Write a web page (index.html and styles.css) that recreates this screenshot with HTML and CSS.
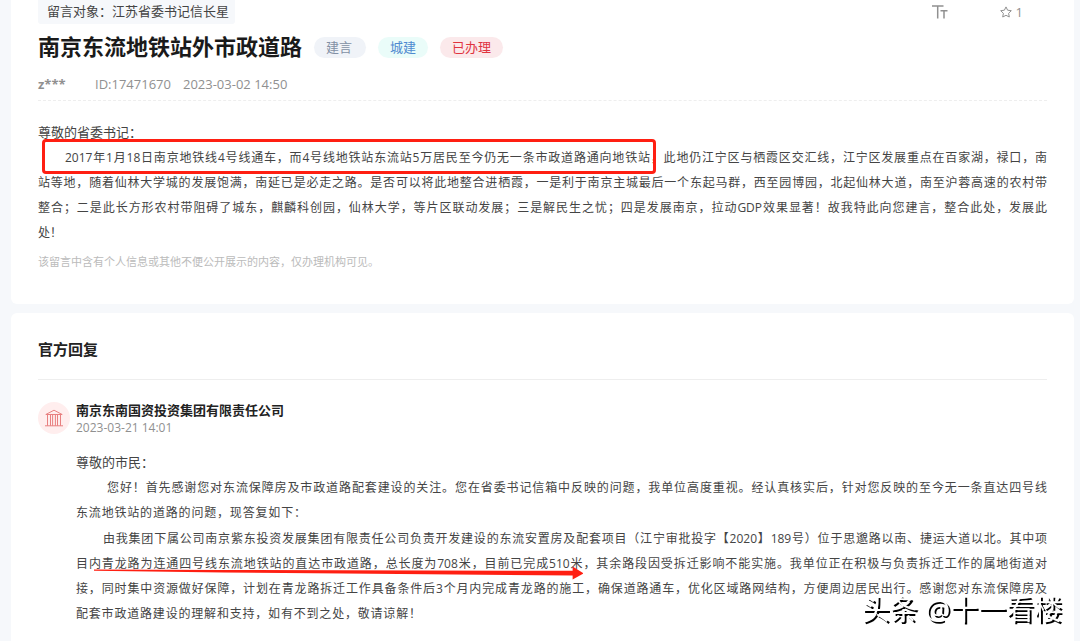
FILE: index.html
```html
<!DOCTYPE html>
<html lang="zh-CN">
<head>
<meta charset="utf-8">
<title>南京东流地铁站外市政道路</title>
<link rel="stylesheet" href="styles.css">
</head>
<body>
<main class="page">
  <article class="card message">
    <div class="topbar">
      <span class="target">留言对象：江苏省委书记信长星</span>
      <div class="tools">
        <button class="tool" type="button" aria-label="字号">
          <svg viewBox="0 0 16 14" width="16" height="14" aria-hidden="true"><path d="M0 1h11.500M5.700 1v12.500M8.500 5.800H15.500M12 5.800v7.700" fill="none" stroke="currentColor" stroke-width="1.500"/></svg>
        </button>
        <button class="tool" type="button" aria-label="收藏 1">
          <svg viewBox="0 0 12 12" width="12" height="12" aria-hidden="true"><path d="M6 .9l1.600 3.300 3.700.5-2.700 2.600.7 3.700L6 9.300 2.700 11l.7-3.700L.7 4.700l3.700-.5z" fill="none" stroke="currentColor" stroke-linejoin="round"/></svg>
          <span>1</span>
        </button>
      </div>
    </div>
    <div class="heading">
      <h1 class="title">南京东流地铁站外市政道路</h1>
      <span class="tag tag-advice">建言</span>
      <span class="tag tag-city">城建</span>
      <span class="tag tag-done">已办理</span>
    </div>
    <div class="meta">
      <b class="user">z***</b>
      <span>ID:17471670</span>
      <time>2023-03-02 14:50</time>
    </div>
    <div class="content">
      <p class="line greeting">尊敬的省委书记：</p>
      <p>
        <span class="line first"><span class="marked">2017年1月18日南京地铁线4号线通车，而4号线地铁站东流站5万居民至今仍无一条市政道路通向地铁站</span>，此地仍江宁区与栖霞区交汇线，江宁区发展重点在百家湖，禄口，南</span>
        <span class="line">站等地，随着仙林大学城的发展饱满，南延已是必走之路。是否可以将此地整合进栖霞，一是利于南京主城最后一个东起马群，西至园博园，北起仙林大道，南至沪蓉高速的农村带</span>
        <span class="line">整合；二是此长方形农村带阻碍了城东，麒麟科创园，仙林大学，等片区联动发展；三是解民生之忧；四是发展南京，拉动GDP效果显著！故我特此向您建言，整合此处，发展此</span>
        <span class="line tail">处！</span>
      </p>
    </div>
    <p class="notice">该留言中含有个人信息或其他不便公开展示的内容，仅办理机构可见。</p>
  </article>

  <section class="card reply">
    <h2 class="section-title">官方回复</h2>
    <div class="reply-row">
      <div class="avatar">
        <svg viewBox="0 0 18 18" width="18" height="18" aria-hidden="true"><path d="M.8 5.500 9 1.200l8.200 4.300zM0 16.800h18M2.500 5.800v11M5.500 5.800v11M7.600 5.800v11M10.400 5.800v11M12.500 5.800v11M15.500 5.800v11" fill="none" stroke="currentColor"/></svg>
      </div>
      <div class="reply-body">
        <h3 class="company">南京东南国资投资集团有限责任公司</h3>
        <time class="reply-time">2023-03-21 14:01</time>
        <div class="content">
          <p class="line greeting">尊敬的市民：</p>
          <p>
            <span class="line hello">您好！首先感谢您对东流保障房及市政道路配套建设的关注。您在省委书记信箱中反映的问题，我单位高度重视。经认真核实后，针对您反映的至今无一条直达四号线</span>
            <span class="line short">东流地铁站的道路的问题，现答复如下：</span>
          </p>
          <p class="para">
            <span class="line first">由我集团下属公司南京紫东投资发展集团有限责任公司负责开发建设的东流安置房及配套项目（江宁审批投字【2020】189号）位于思邈路以南、捷运大道以北。其中项</span>
            <span class="line">目内<span class="underlined">青龙路为连通四号线东流地铁站的直达市政道路，总长度为708米，目前已完成510米<svg class="arrow" viewBox="0 0 490 14" preserveAspectRatio="none" aria-hidden="true"><path d="M0 3.500 130 4l349 .8V.5L490 7.500 479 13.500V9.500L250 7.500 130 6.500 0 4.800z" fill="#ff1f12"/></svg></span>，其余路段因受拆迁影响不能实施。我单位正在积极与负责拆迁工作的属地街道对</span>
            <span class="line">接，同时集中资源做好保障，计划在青龙路拆迁工作具备条件后3个月内完成青龙路的施工，确保道路通车，优化区域路网结构，方便周边居民出行。感谢您对东流保障房及</span>
            <span class="line medium">配套市政道路建设的理解和支持，如有不到之处，敬请谅解！</span>
          </p>
        </div>
      </div>
    </div>
  </section>
</main>
<div class="watermark">头条 @十一看楼</div>
</body>
</html>
```

FILE: styles.css
```css
* {
  box-sizing: border-box;
}

body {
  margin: 0;
  background: #f6f8fb;
  color: #444;
  font: 13px/20px "Open Sans", "Noto Sans CJK SC", sans-serif;
}

h1, h2, h3, p {
  margin: 0;
}

.page {
  display: flex;
  flex-direction: column;
  gap: 9px;
  min-height: 100vh;
  padding: 0 6px 0 11px;
}

.card {
  background: #fff;
  padding: 0 27px;
}

.message {
  border-radius: 0 0 6px 6px;
  padding-bottom: 33px;
}

.reply {
  flex: 1;
  border-radius: 6px 6px 0 0;
  padding-bottom: 10px;
}

.topbar {
  display: flex;
  justify-content: space-between;
  height: 24px;
}

.target {
  padding: 1px 6px 0 9px;
  background: #f6f8fb;
  border-radius: 0 0 3px 3px;
}

.tools {
  display: flex;
  align-items: center;
  gap: 52px;
  padding-right: 24px;
}

.tool {
  display: flex;
  align-items: center;
  gap: 4px;
  padding: 0;
  border: 0;
  background: none;
  color: #909090;
  font: inherit;
}

.heading {
  display: flex;
  align-items: center;
  gap: 12px;
  height: 46px;
}

.title {
  padding-bottom: 2px;
  color: #1a1a1a;
  font-size: 22px;
  line-height: 30px;
  font-weight: 700;
}

.tag {
  padding: 0 12px;
  border-radius: 11px;
  line-height: 21px;
}

.tag-advice {
  padding: 0 14px 0 12px;
  background: #f0f3f8;
  color: #8290a5;
}

.tag-city {
  background: #eafcf9;
  color: #4f8bd0;
}

.tag-done {
  background: #fbe9eb;
  color: #e0343f;
}

.meta {
  display: flex;
  align-items: center;
  gap: 12px;
  height: 31px;
  padding-bottom: 3px;
  border-bottom: 1px dashed #eee;
  color: #909090;
}

.user {
  width: 45px;
}

.content {
  font-size: 12px;
  line-height: 25px;
}

.message .content {
  padding-top: 19px;
}

.line {
  display: block;
  white-space: nowrap;
  text-align: justify;
  text-align-last: justify;
}

.greeting,
.tail {
  text-align-last: left;
}

.greeting {
  font-size: 13px;
}

.short {
  width: 230px;
}

.medium {
  width: 345px;
}

.first {
  padding-left: 27px;
}

.hello {
  padding-left: 31px;
}

.para {
  padding-top: 1px;
}

.marked,
.underlined {
  position: relative;
}

.marked::after {
  content: "";
  position: absolute;
  inset: -10px -5px -8px -23px;
  border: 3px solid #ff1f12;
  border-radius: 4px;
}

.arrow {
  position: absolute;
  left: -8px;
  bottom: -8px;
  width: calc(100% + 8px);
  height: 14px;
}

.notice {
  padding-top: 8px;
  color: #bbb;
  font-size: 11px;
  line-height: 18px;
}

.section-title {
  padding: 26px 0 20px;
  border-bottom: 1px solid #eee;
  color: #222;
  font-size: 15px;
  font-weight: 700;
}

.reply-row {
  display: flex;
  gap: 6px;
  padding-top: 20px;
}

.avatar {
  display: flex;
  align-items: center;
  justify-content: center;
  width: 32px;
  height: 32px;
  margin-top: 2px;
  border-radius: 50%;
  background: #ffeeee;
  color: #e88080;
}

.reply-body {
  flex: 1;
}

.company {
  color: #222;
  font-size: 13px;
  font-weight: 700;
}

.reply-time {
  display: block;
  color: #909090;
  font-size: 12px;
  line-height: 16px;
}

.reply .content {
  padding-top: 14px;
}

.watermark {
  position: fixed;
  right: 18px;
  bottom: 12px;
  color: #fff;
  font-size: 28px;
  line-height: 40px;
  text-shadow: 2px 2px 0 #000;
}
```
